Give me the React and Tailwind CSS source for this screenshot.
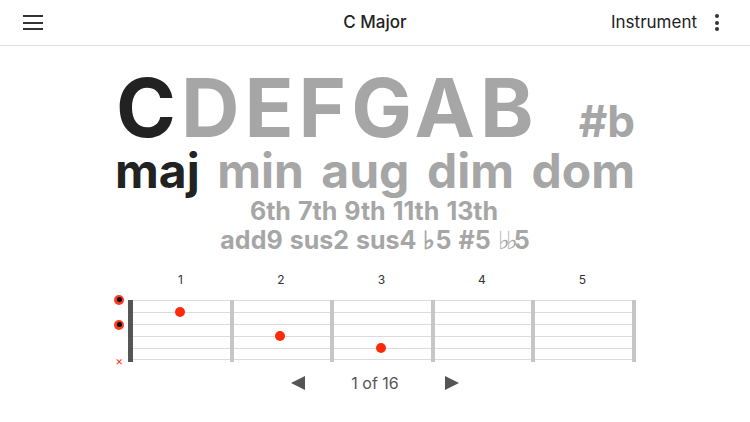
import { useState } from "react";

const frets = [1, 2, 3, 4, 5];

// string index 0 = top line, fret index 0 = first fret
const notes = [
    { fret: 0, string: 1 },
    { fret: 1, string: 3 },
    { fret: 2, string: 4 },
];

function OpenMark() {
    return (
        <div className="w-[10px] h-[10px] rounded-full bg-[#ff3b1f] flex items-center justify-center">
            <div className="w-[5px] h-[5px] rounded-full bg-black" />
        </div>
    );
}

function Fretboard() {
    return (
        <div className="flex flex-col items-center mt-[21px] ml-[4px]">
            <div className="flex ml-[10px]">
                <div className="w-[5px]" />
                {frets.map((f) => (
                    <div key={f} className="w-[100.5px] pr-[6px] text-center text-[12px] leading-none text-[#333]">
                        {f}
                    </div>
                ))}
            </div>
            <div className="flex mt-[14px] ml-[10px]">
                <div className="relative w-[22px] h-[62px] -ml-[22px]">
                    <div className="absolute left-[8px] top-[-5px]"><OpenMark /></div>
                    <div className="absolute left-[8px] top-[20px]"><OpenMark /></div>
                    <div className="absolute left-[9px] top-[55px] text-[12px] leading-none text-[#ff3b1f]">×</div>
                </div>
                <div className="w-[5px] h-[62px] bg-[#555]" />
                {frets.map((f, i) => (
                    <div key={f} className="relative w-[100.5px] h-[62px] border-r-[4.5px] border-[#c6c6c6]">
                        <div className="flex flex-col">
                            {[0, 1, 2, 3, 4].map((s) => (
                                <div key={s} className={"h-[12.2px] border-t border-[#dcdcdc]" + (s === 4 ? " border-b" : "")} />
                            ))}
                        </div>
                        {notes.filter((n) => n.fret === i).map((n) => (
                            <div
                                key={n.string}
                                className="absolute w-[10px] h-[10px] rounded-full bg-[#ff2a0a] left-[41.5px]"
                                style={{ top: n.string * 12.2 - 5 }}
                            />
                        ))}
                    </div>
                ))}
            </div>
        </div>
    );
}

function App() {
    const [page, setPage] = useState(1);

    return (
        <div className="w-[750px] h-[422px] bg-white overflow-hidden font-['Inter',sans-serif] text-[#222]">
            <header className="h-[46px] flex items-center justify-between border-b border-[#e2e2e2] pl-[23px] pr-[31px]">
                <div className="w-[20px] flex flex-col gap-[4.5px]">
                    <div className="h-[2px] bg-[#333]" />
                    <div className="h-[2px] bg-[#333]" />
                    <div className="h-[2px] bg-[#333]" />
                </div>
                <div className="absolute left-0 right-0 text-center pointer-events-none text-[17px] font-medium">C Major</div>
                <div className="flex items-center gap-[18px]">
                    <span className="text-[17px]">Instrument</span>
                    <div className="flex flex-col gap-[2.5px] w-[4px]">
                        <div className="w-[4px] h-[4px] rounded-full bg-[#333]" />
                        <div className="w-[4px] h-[4px] rounded-full bg-[#333]" />
                        <div className="w-[4px] h-[4px] rounded-full bg-[#333]" />
                    </div>
                </div>
            </header>

            <main className="flex flex-col items-center font-bold text-[#a6a6a6]">
                <div className="w-[520px] flex items-baseline justify-between mt-[22.5px]">
                    <div className="text-[81px] leading-[78px] tracking-[5px] ml-[1px]">
                        <span className="text-[#222]">C</span>DEFGAB
                    </div>
                    <div className="text-[44px] leading-none">#b</div>
                </div>
                <div className="w-[520px] flex justify-between text-[48px] leading-none">
                    <span className="text-[#222]">maj</span>
                    <span>min</span>
                    <span>aug</span>
                    <span>dim</span>
                    <span>dom</span>
                </div>
                <div className="text-[25px] leading-none mt-[4px] flex gap-[7px] -ml-[2px]">
                    <span>6th</span>
                    <span>7th</span>
                    <span>9th</span>
                    <span>11th</span>
                    <span>13th</span>
                </div>
                <div className="text-[25px] leading-none mt-[4px] flex gap-[7px]">
                    <span>add9</span>
                    <span>sus2</span>
                    <span>sus4</span>
                    <span>♭5</span>
                    <span>#5</span>
                    <span><span className="font-normal tracking-[-4px]">♭♭</span>5</span>
                </div>

                <div className="font-normal">
                    <Fretboard />
                </div>

                <div className="flex items-center mt-[9px] font-normal text-[#555]">
                    <button onClick={() => setPage(Math.max(1, page - 1))} className="w-[14px] h-[14px]">
                        <svg viewBox="0 0 14 14" className="w-[14px] h-[14px]"><path d="M0 7 L14 0 L14 14 Z" fill="#555" /></svg>
                    </button>
                    <span className="text-[16px] mx-[46px]">{page} of 16</span>
                    <button onClick={() => setPage(Math.min(16, page + 1))} className="w-[14px] h-[14px]">
                        <svg viewBox="0 0 14 14" className="w-[14px] h-[14px]"><path d="M14 7 L0 0 L0 14 Z" fill="#555" /></svg>
                    </button>
                </div>
            </main>
        </div>
    );
}

export default App;
